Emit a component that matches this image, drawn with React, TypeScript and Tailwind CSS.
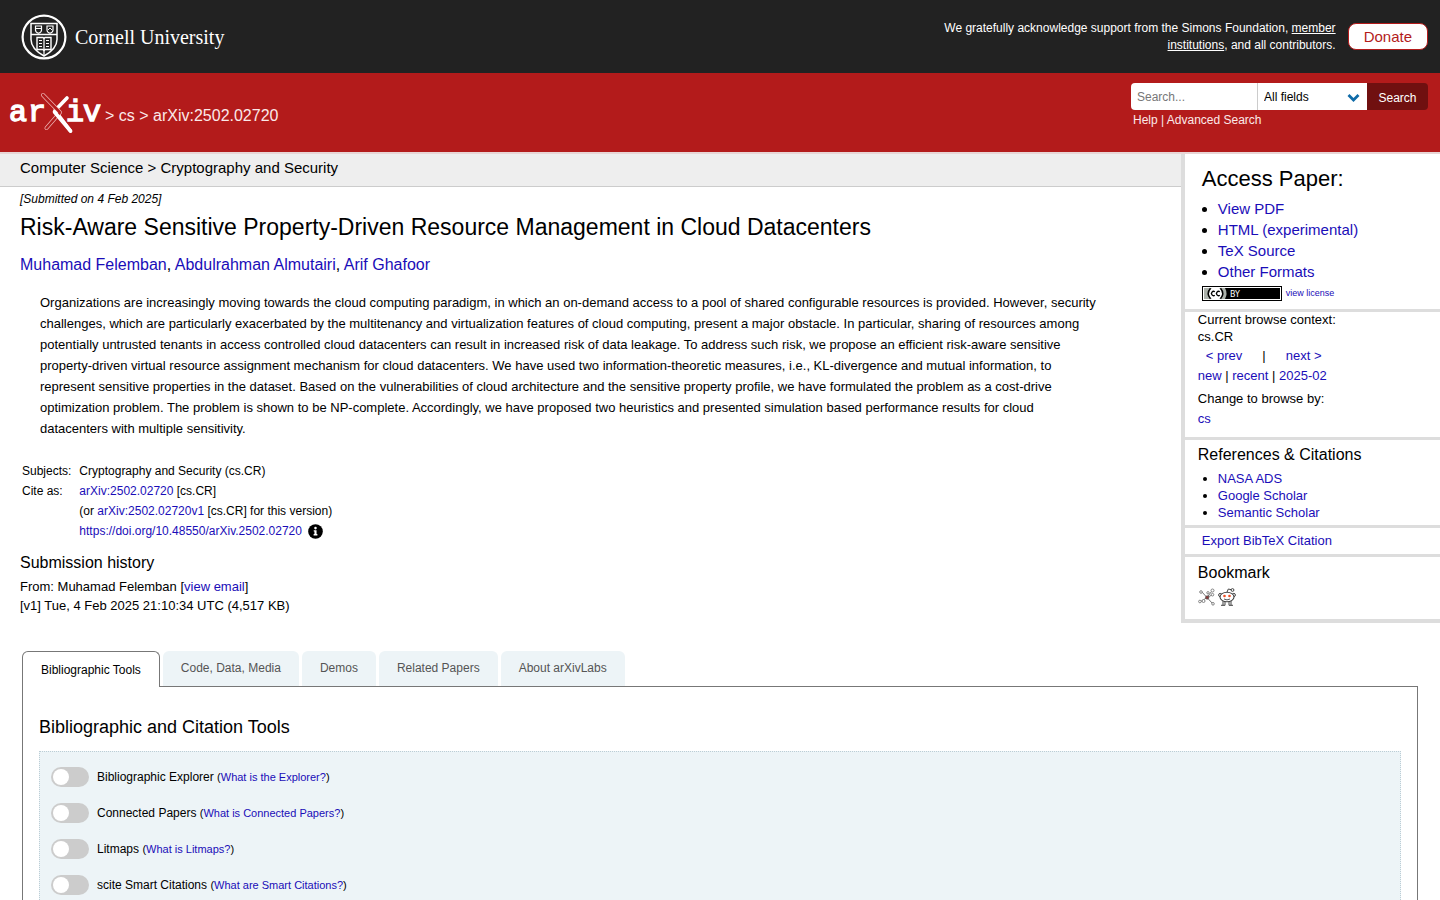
import React, { useState } from 'react';

const LINK = 'text-[#1a0db8] hover:underline';

const TABS = ['Bibliographic Tools', 'Code, Data, Media', 'Demos', 'Related Papers', 'About arXivLabs'];

const TOOLS = [
    { id: 'bibex', name: 'Bibliographic Explorer', help: 'What is the Explorer?' },
    { id: 'connected', name: 'Connected Papers', help: 'What is Connected Papers?' },
    { id: 'litmaps', name: 'Litmaps', help: 'What is Litmaps?' },
    { id: 'scite', name: 'scite Smart Citations', help: 'What are Smart Citations?' },
];

const ABSTRACT =
    'Organizations are increasingly moving towards the cloud computing paradigm, in which an on-demand access to a pool of shared configurable resources is provided. However, security challenges, which are particularly exacerbated by the multitenancy and virtualization features of cloud computing, present a major obstacle. In particular, sharing of resources among potentially untrusted tenants in access controlled cloud datacenters can result in increased risk of data leakage. To address such risk, we propose an efficient risk-aware sensitive property-driven virtual resource assignment mechanism for cloud datacenters. We have used two information-theoretic measures, i.e., KL-divergence and mutual information, to represent sensitive properties in the dataset. Based on the vulnerabilities of cloud architecture and the sensitive property profile, we have formulated the problem as a cost-drive optimization problem. The problem is shown to be NP-complete. Accordingly, we have proposed two heuristics and presented simulation based performance results for cloud datacenters with multiple sensitivity.';

const CornellSeal = () => (
    <svg width="46" height="46" viewBox="0 0 46 46" fill="none" stroke="#fff" aria-hidden="true">
        <circle cx="23" cy="23" r="21.4" strokeWidth="2.2" />
        <path d="M10 9.500h26v16c0 7.500-5 12-13 16.500-8-4.500-13-9-13-16.500z" strokeWidth="1.500" />
        <path d="M10 20.500h26" strokeWidth="1.500" />
        <path d="M14.500 12h6v4.200c0 1.500-1.200 2.400-3 3.100-1.800-.7-3-1.600-3-3.100zM26 12h6v4.200c0 1.500-1.200 2.400-3 3.100-1.800-.7-3-1.600-3-3.100z" strokeWidth="1.200" />
        <path d="M15 14.500h5M27 16l2-2 2 2" strokeWidth="1" />
        <path d="M16 23.500h6l1 .8 1-.8h6v12h-6l-1 1-1-1h-6z" strokeWidth="1.400" />
        <path d="M23 24v17M18 26.500h3M18 29.500h3M18 32.500h3M25 26.500h3M25 29.500h3M25 32.500h3" strokeWidth="1.200" />
    </svg>
);

const ArxivLogo = () => (
    <svg width="92" height="42" viewBox="0 0 92 42" role="img" aria-label="arXiv">
        <g fill="#fff" stroke="#fff" strokeWidth="1.400" fontFamily="'Liberation Mono', monospace" fontSize="30">
            <text x="0" y="28.500">a</text>
            <text x="19" y="28.500">r</text>
            <text x="57" y="28.500">i</text>
            <text x="74" y="28.500">v</text>
        </g>
        <g fill="none" strokeLinecap="round" strokeLinejoin="round">
            <path d="M58 6 46 18.500 61.500 39" stroke="#fff" strokeWidth="3.600" />
            <path d="M34 3 51 20.500 37.500 36" stroke="#f0b8b8" strokeWidth="4" />
            <path d="M34 3 51 20.500 37.500 36" stroke="#b31b1b" strokeWidth="2.600" />
            <path d="M45.500 20 61.500 39" stroke="#fff" strokeWidth="3.600" />
        </g>
    </svg>
);

const CcBadge = () => (
    <svg width="80" height="15" viewBox="0 0 80 15" role="img" aria-label="license icon">
        <rect width="80" height="15" fill="#000" />
        <rect x="1" y="1" width="78" height="13" fill="#fff" />
        <rect x="2" y="2" width="76" height="11" fill="#000" />
        <path d="M2 2h21q3 5.500 0 11H2z" fill="#abb1aa" />
        <circle cx="13.500" cy="7.500" r="6.500" fill="#fff" />
        <path d="M8.500 2.200q-4.500 5.300 0 10.600M18.500 2.200q4.500 5.300 0 10.600" fill="none" stroke="#000" strokeWidth="1.500" />
        <path d="M12.800 5.800a2.100 2.100 0 1 0 0 3.400M17.800 5.800a2.100 2.100 0 1 0 0 3.400" fill="none" stroke="#000" strokeWidth="1.400" />
        <text x="28" y="10.500" fill="#fff" fontFamily="'DejaVu Sans', sans-serif" fontSize="8">BY</text>
    </svg>
);

const BibsonomyIcon = () => (
    <svg width="18" height="18" viewBox="0 0 18 18" fill="none" stroke="#777" aria-hidden="true">
        <path d="m3.500 3.500 5.500 6 5.500 6M9 9.500l4.500-6M9 9.500l-6 4M9 9.500l5-2.500" strokeWidth="1" />
        <g fill="#fff" strokeWidth="0.900">
            <circle cx="3" cy="4" r="1.300" />
            <circle cx="10" cy="4.800" r="1.200" />
            <circle cx="14.500" cy="2.500" r="1.500" />
            <circle cx="14.500" cy="6.700" r="1.300" />
            <circle cx="1.900" cy="13.500" r="1.300" />
            <circle cx="5.500" cy="13" r="1.500" />
            <circle cx="15" cy="15.800" r="1.300" />
        </g>
        <circle cx="9.200" cy="9.500" r="1.700" fill="#8b3a3a" stroke="#555" strokeWidth="0.700" />
    </svg>
);

const RedditIcon = () => (
    <svg width="18" height="18" viewBox="0 0 18 18" fill="none" stroke="#444" aria-hidden="true">
        <path d="M5 12.500v4.800M7 13.500v3.800M13 12.500v4.800M11 13.500v3.800M3 17.300h4M11 17.300h4" strokeWidth="1" />
        <circle cx="2.200" cy="7" r="1.600" fill="#fff" />
        <circle cx="15.800" cy="7" r="1.600" fill="#fff" />
        <ellipse cx="9" cy="9" rx="7" ry="4.800" fill="#fff" strokeWidth="1.100" />
        <path d="M9 4.200 10.300 1l3 .7" strokeWidth="1" />
        <circle cx="14.500" cy="2" r="1.400" fill="#fff" />
        <circle cx="6.500" cy="8" r="1.300" fill="#f04e23" stroke="none" />
        <circle cx="11.500" cy="8" r="1.300" fill="#f04e23" stroke="none" />
        <path d="M6 11q3 1.800 6 0" strokeWidth="0.900" />
    </svg>
);

const InfoIcon = () => (
    <svg width="15" height="15" viewBox="0 0 512 512" aria-hidden="true">
        <circle cx="256" cy="256" r="250" fill="#000" />
        <circle cx="256" cy="140" r="44" fill="#fff" />
        <path d="M196 212h96v132h28v48H192v-48h28v-84h-24z" fill="#fff" />
    </svg>
);

const Header: React.FC = () => (
    <header>
        <div className="flex h-[73px] items-center justify-between bg-[#222] pl-[21px] pr-3 text-white">
            <a href="#cornell" className="flex items-center gap-2">
                <CornellSeal />
                <span className="font-['Liberation_Serif',serif] text-xl">Cornell University</span>
            </a>
            <div className="flex items-center gap-3">
                <p className="w-[400px] text-right text-xs leading-[17px]">
                    We gratefully acknowledge support from the Simons Foundation,{' '}
                    <a href="#members" className="underline">member institutions</a>, and all contributors.
                </p>
                <a
                    href="#donate"
                    className="rounded-lg border border-[#b31b1b] bg-white px-[15px] text-[15px] leading-[25px] text-[#b31b1b]"
                >
                    Donate
                </a>
            </div>
        </div>
        <div className="flex h-[81px] justify-between border-b-2 border-[#e8d5d5] bg-[#b31b1b] pl-[9px] pr-3 text-[#fbe9e9]">
            <div className="flex items-start pt-[19px]">
                <a href="#home"><ArxivLogo /></a>
                <nav className="pl-1 pt-3 text-base leading-6">
                    &gt; <a href="#cs">cs</a> &gt; arXiv:2502.02720
                </nav>
            </div>
            <form className="pt-[10px] text-xs" onSubmit={(e) => e.preventDefault()}>
                <div className="flex h-[27px]">
                    <input
                        type="text"
                        aria-label="Search term or terms"
                        placeholder="Search..."
                        className="w-[126px] rounded-l-sm bg-white px-[6px] text-black placeholder:text-[#777]"
                    />
                    <div className="relative border-l border-[#ccc]">
                        <select
                            aria-label="Field to search"
                            className="h-full w-[109px] appearance-none bg-white px-[6px] text-black"
                        >
                            <option>All fields</option>
                        </select>
                        <svg className="pointer-events-none absolute right-[7px] top-[10px]" width="13" height="10" viewBox="0 0 13 10">
                            <path d="m1.500 2 5 5 5-5" fill="none" stroke="#0f6ba8" strokeWidth="2.800" />
                        </svg>
                    </div>
                    <button type="submit" className="w-[61px] rounded-r-sm bg-[#701010] pt-[2px] text-white">Search</button>
                </div>
                <p className="pl-[2px] leading-5">
                    <a href="#help">Help</a> | <a href="#advanced">Advanced Search</a>
                </p>
            </form>
        </div>
    </header>
);

const Sidebar: React.FC = () => (
    <aside className="w-[18%] shrink-0 divide-y-3 divide-[#ddd] border-b-4 border-l-4 border-[#ddd] text-[13px]">
        <section className="px-[17px] pb-2 pt-[10px]">
            <h2 className="text-[22px] leading-[30px]">Access Paper:</h2>
            <ul className="list-disc pl-4 pt-1 text-[15px] leading-[21px]">
                {['View PDF', 'HTML (experimental)', 'TeX Source', 'Other Formats'].map((item) => (
                    <li key={item}><a href="#format" className={LINK}>{item}</a></li>
                ))}
            </ul>
            <a href="#license" className={`${LINK} flex items-center gap-1 pt-1 text-[9px] leading-[15px]`}>
                <CcBadge />
                view license
            </a>
        </section>
        <section className="px-[13px] pb-2">
            <p className="leading-4">Current browse context:</p>
            <p className="leading-[17px]">cs.CR</p>
            <div className="flex gap-5 px-2 leading-[21px]">
                <a href="#prev" className={LINK}>&lt; prev</a>
                <span>|</span>
                <a href="#next" className={LINK}>next &gt;</a>
            </div>
            <p className="leading-5">
                <a href="#new" className={LINK}>new</a> | <a href="#recent" className={LINK}>recent</a> |{' '}
                <a href="#month" className={LINK}>2025-02</a>
            </p>
            <p className="pt-[3px] leading-5">Change to browse by:</p>
            <a href="#cs" className={`${LINK} block leading-5`}>cs</a>
        </section>
        <section className="px-[13px] pb-1 pt-[3px]">
            <h3 className="text-base leading-6">References &amp; Citations</h3>
            <ul className="list-disc pl-5 pt-[3px] leading-[17px]">
                {['NASA ADS', 'Google Scholar', 'Semantic Scholar'].map((item) => (
                    <li key={item}><a href="#reference" className={LINK}>{item}</a></li>
                ))}
            </ul>
        </section>
        <section className="px-[17px] py-[3px]">
            <button type="button" className={`${LINK} block leading-5`}>Export BibTeX Citation</button>
        </section>
        <section className="px-[13px] pb-[13px] pt-1">
            <h3 className="text-base leading-6">Bookmark</h3>
            <div className="flex gap-[2px] pt-[3px]">
                <a href="#bibsonomy" aria-label="BibSonomy"><BibsonomyIcon /></a>
                <a href="#reddit" aria-label="Reddit"><RedditIcon /></a>
            </div>
        </section>
    </aside>
);

const Paper: React.FC = () => (
    <main className="min-w-0 flex-1">
        <div className="border-b border-[#ccc] bg-[#eee] px-5 pb-[6px] pt-[2px] text-[15px] leading-6">
            Computer Science &gt; Cryptography and Security
        </div>
        <div className="px-5">
            <p className="pt-1 text-xs italic leading-4">[Submitted on 4 Feb 2025]</p>
            <h1 className="pt-1 text-[23px] leading-8">
                Risk-Aware Sensitive Property-Driven Resource Management in Cloud Datacenters
            </h1>
            <p className="pt-[10px] text-base leading-6">
                <a href="#felemban" className={LINK}>Muhamad Felemban</a>,{' '}
                <a href="#almutairi" className={LINK}>Abdulrahman Almutairi</a>,{' '}
                <a href="#ghafoor" className={LINK}>Arif Ghafoor</a>
            </p>
            <blockquote className="pl-5 pr-14 pt-[15px] text-[13px] leading-[21px]">{ABSTRACT}</blockquote>
            <table className="ml-[2px] mt-[22px] text-xs leading-5">
                <tbody>
                    <tr>
                        <td className="pr-2">Subjects:</td>
                        <td>Cryptography and Security (cs.CR)</td>
                    </tr>
                    <tr>
                        <td>Cite as:</td>
                        <td><a href="#id" className={LINK}>arXiv:2502.02720</a> [cs.CR]</td>
                    </tr>
                    <tr>
                        <td />
                        <td>(or <a href="#v1" className={LINK}>arXiv:2502.02720v1</a> [cs.CR] for this version)</td>
                    </tr>
                    <tr>
                        <td />
                        <td className="flex items-center gap-[6px]">
                            <a href="#doi" className={LINK}>https://doi.org/10.48550/arXiv.2502.02720</a>
                            <button type="button" aria-label="Focus to learn more"><InfoIcon /></button>
                        </td>
                    </tr>
                </tbody>
            </table>
            <h2 className="pt-[10px] text-base leading-6">Submission history</h2>
            <p className="pt-[2px] text-[13px] leading-[19px]">
                From: Muhamad Felemban [<a href="#email" className={LINK}>view email</a>]<br />
                [v1] Tue, 4 Feb 2025 21:10:34 UTC (4,517 KB)
            </p>
        </div>
    </main>
);

const Labs: React.FC = () => {
    const [active, setActive] = useState(TABS[0]);

    return (
        <section className="px-[22px] pt-7 text-xs">
            <div role="tablist" className="flex gap-[3px]">
                {TABS.map((tab) => (
                    <button
                        key={tab}
                        type="button"
                        role="tab"
                        aria-selected={tab === active}
                        onClick={() => setActive(tab)}
                        className={
                            tab === active
                                ? 'relative z-10 -mb-px h-9 rounded-t-md border border-b-0 border-[#777] bg-white px-[18px] text-black'
                                : 'h-[35px] rounded-t-md bg-[#edf4f7] px-[18px] pb-[2px] text-[#555]'
                        }
                    >
                        {tab}
                    </button>
                ))}
            </div>
            <div className="border border-[#777] px-4 pt-7">
                <h2 className="text-lg leading-6">Bibliographic and Citation Tools</h2>
                <div className="mt-3 border border-dotted border-[#bbcdd5] bg-[#edf4f7] px-[11px] pt-[7px]">
                    {TOOLS.map((tool) => (
                        <div key={tool.id} className="flex h-9 items-center gap-2">
                            <input
                                id={tool.id}
                                type="checkbox"
                                className="h-5 w-[38px] appearance-none rounded-full bg-[#ccc] p-[2px] before:block before:size-4 before:rounded-full before:bg-white checked:bg-[#1f5e96] checked:before:ml-[18px]"
                            />
                            <p>
                                <label htmlFor={tool.id}>{tool.name}</label>{' '}
                                <span className="text-[11px]">
                                    (<a href="#about-tool" className={LINK}>{tool.help}</a>)
                                </span>
                            </p>
                        </div>
                    ))}
                </div>
            </div>
        </section>
    );
};

export default function App() {
    return (
        <div className="h-screen overflow-hidden bg-white font-['Liberation_Sans',Arial,sans-serif] text-black">
            <Header />
            <div className="flex items-start">
                <Paper />
                <Sidebar />
            </div>
            <Labs />
        </div>
    );
}
